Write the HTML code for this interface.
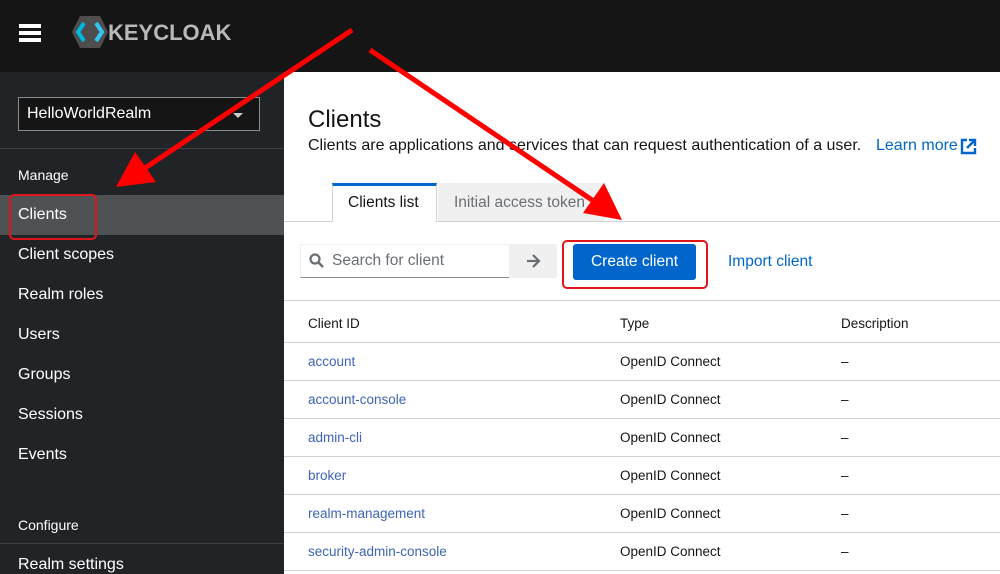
<html><head><style>
body{margin:0;width:1000px;height:574px;overflow:hidden;font-family:"Liberation Sans",sans-serif;position:relative;background:#fff}
.hdr{position:absolute;left:0;top:0;width:1000px;height:72px;background:#151515}
.side{position:absolute;left:0;top:72px;width:284px;height:502px;background:#212427;color:#fff}
.nav{position:absolute;left:18px;font-size:16px;color:#fff}
.a{position:absolute;font-size:13.5px;color:#3d64b8}
.t{position:absolute;font-size:13.5px;color:#151515}
.line{position:absolute;left:284px;width:716px;height:1px;background:#d2d2d2}
</style></head><body>
<div class="hdr">
<div style="position:absolute;left:19px;top:24px;width:22px;height:4px;background:#fff;box-shadow:0 7px 0 #fff,0 14px 0 #fff"></div>
<svg style="position:absolute;left:70px;top:14px" width="40" height="36"><polygon points="10,2 30,2 38,18 30,34 10,34 2,18" fill="#4d4d4d"/><polyline points="14,9 8,18 14,27" fill="none" stroke="#00b8e3" stroke-width="4"/><polyline points="26,9 32,18 26,27" fill="none" stroke="#33c6f4" stroke-width="4"/></svg>
<div style="position:absolute;left:108px;top:20px;font-size:22px;font-weight:bold;color:#b8b8b8;letter-spacing:0">KEYCLOAK</div>
</div>
<div class="side">
<div style="position:absolute;left:18px;top:25px;width:240px;height:32px;border:1px solid #8a8d90;background:#151515"></div>
<div class="nav" style="top:33px;left:27px">HelloWorldRealm</div>
<div style="position:absolute;left:233px;top:41px;border:5px solid transparent;border-top:5px solid #ccc"></div>
<div style="position:absolute;left:0;top:76px;width:284px;height:1px;background:#3c3f42"></div>
<div class="nav" style="top:95px;font-size:14px">Manage</div>
<div style="position:absolute;left:0;top:123px;width:284px;height:40px;background:#4f5255"></div>
<div style="position:absolute;left:9px;top:122px;width:88px;height:46px;border:2px solid #e0151b;border-radius:5px;box-sizing:border-box"></div>
<div class="nav" style="top:134px">Clients</div>
<div class="nav" style="top:174px">Client scopes</div>
<div class="nav" style="top:214px">Realm roles</div>
<div class="nav" style="top:254px">Users</div>
<div class="nav" style="top:294px">Groups</div>
<div class="nav" style="top:334px">Sessions</div>
<div class="nav" style="top:374px">Events</div>
<div class="nav" style="top:445px;font-size:14px">Configure</div>
<div style="position:absolute;left:0;top:471px;width:284px;height:1px;background:#3c3f42"></div>
<div class="nav" style="top:484px">Realm settings</div>
</div>
<div style="position:absolute;left:308px;top:106px;font-size:24px;color:#151515">Clients</div>
<div style="position:absolute;left:308px;top:137px;font-size:16px;color:#151515">Clients are applications and services that can request authentication of a user.</div>
<div style="position:absolute;left:876px;top:137px;font-size:16px;color:#06c">Learn more</div>
<svg style="position:absolute;left:960px;top:138px" width="17" height="17"><path d="M7 2H2V15H15V10" fill="none" stroke="#06c" stroke-width="2.4"/><path d="M9 2H15V8" fill="none" stroke="#06c" stroke-width="2.4"/><line x1="15" y1="2" x2="7" y2="10" stroke="#06c" stroke-width="2.4"/></svg>
<div class="line" style="top:221px"></div>
<div style="position:absolute;left:332px;top:183px;width:105px;height:39px;background:#fff;border:1px solid #d2d2d2;border-bottom:none;border-top:3px solid #06c;box-sizing:border-box"></div>
<div style="position:absolute;left:348px;top:194px;font-size:15.5px;color:#151515">Clients list</div>
<div style="position:absolute;left:438px;top:183px;width:166px;height:38px;background:#f0f0f0"></div>
<div style="position:absolute;left:454px;top:194px;font-size:15.5px;color:#6a6e73">Initial access token</div>
<div style="position:absolute;left:300px;top:244px;width:209px;height:34px;border-bottom:1px solid #8a8d90;border-top:1px solid #f0f0f0;border-left:1px solid #f0f0f0;box-sizing:border-box"></div>
<svg style="position:absolute;left:309px;top:253px" width="16" height="16"><circle cx="6" cy="6" r="4.5" fill="none" stroke="#6a6e73" stroke-width="2.2"/><line x1="9" y1="9" x2="14" y2="14" stroke="#6a6e73" stroke-width="2.5"/></svg>
<div style="position:absolute;left:332px;top:252px;font-size:15.5px;color:#6a6e73">Search for client</div>
<div style="position:absolute;left:509px;top:244px;width:48px;height:34px;background:#f0f0f0"></div>
<svg style="position:absolute;left:525px;top:253px" width="16" height="16"><path d="M2 8H14M8 2L14 8L8 14" fill="none" stroke="#6a6e73" stroke-width="2.2"/></svg>
<div style="position:absolute;left:562px;top:240px;width:146px;height:49px;border:2px solid #e0151b;border-radius:5px;box-sizing:border-box"></div>
<div style="position:absolute;left:573px;top:244px;width:123px;height:36px;background:#06c;border-radius:3px;color:#fff;font-size:15.5px;text-align:center;line-height:36px">Create client</div>
<div style="position:absolute;left:728px;top:253px;font-size:15.5px;color:#06c">Import client</div>
<div class="line" style="top:300px"></div>
<div class="t" style="left:308px;top:316px">Client ID</div>
<div class="t" style="left:620px;top:316px">Type</div>
<div class="t" style="left:841px;top:316px">Description</div>
<div class="line" style="top:342px"></div>
<div class="a" style="left:308px;top:354px">account</div><div class="t" style="left:620px;top:354px">OpenID Connect</div><div class="t" style="left:841px;top:354px">–</div>
<div class="line" style="top:380px"></div>
<div class="a" style="left:308px;top:392px">account-console</div><div class="t" style="left:620px;top:392px">OpenID Connect</div><div class="t" style="left:841px;top:392px">–</div>
<div class="line" style="top:418px"></div>
<div class="a" style="left:308px;top:430px">admin-cli</div><div class="t" style="left:620px;top:430px">OpenID Connect</div><div class="t" style="left:841px;top:430px">–</div>
<div class="line" style="top:456px"></div>
<div class="a" style="left:308px;top:468px">broker</div><div class="t" style="left:620px;top:468px">OpenID Connect</div><div class="t" style="left:841px;top:468px">–</div>
<div class="line" style="top:494px"></div>
<div class="a" style="left:308px;top:506px">realm-management</div><div class="t" style="left:620px;top:506px">OpenID Connect</div><div class="t" style="left:841px;top:506px">–</div>
<div class="line" style="top:532px"></div>
<div class="a" style="left:308px;top:544px">security-admin-console</div><div class="t" style="left:620px;top:544px">OpenID Connect</div><div class="t" style="left:841px;top:544px">–</div>
<div class="line" style="top:570px"></div>
<svg style="position:absolute;left:0;top:0" width="1000" height="574">
<line x1="352" y1="30" x2="145" y2="168" stroke="#f00" stroke-width="5"/>
<polygon points="116,187 135,152 156,182" fill="#f00"/>
<line x1="370" y1="50" x2="595" y2="202" stroke="#f00" stroke-width="5"/>
<polygon points="622,220 583,213 604,183" fill="#f00"/>
</svg>
</body></html>
